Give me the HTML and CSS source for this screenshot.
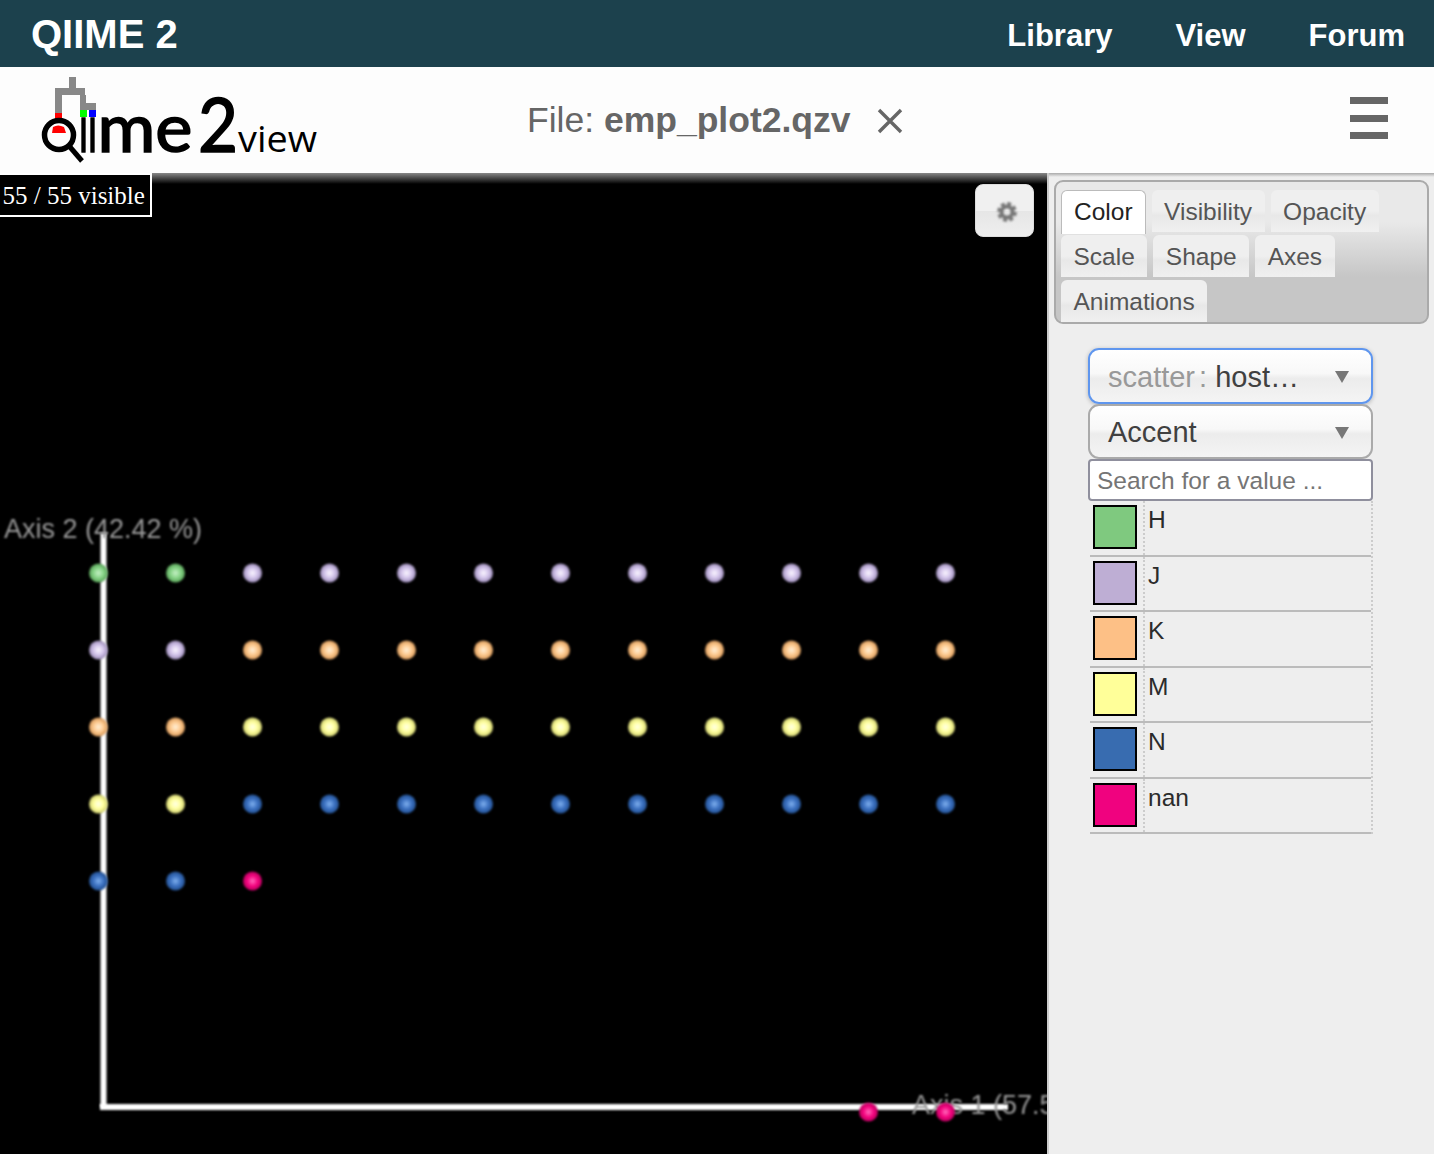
FILE: index.html
```html
<!DOCTYPE html>
<html lang="en">
<head>
<meta charset="UTF-8">
<title>QIIME 2 View</title>
<link rel="stylesheet" href="styles.css">
</head>
<body>
    <nav class="topbar">
        <span class="brand">QIIME 2</span>
        <div class="nav-links">
            <a>Library</a>
            <a>View</a>
            <a>Forum</a>
        </div>
    </nav>

    <header class="filebar">
        <svg class="logo" width="290" height="100" viewBox="30 70 290 100">
            <!-- tree -->
            <rect class="tree" x="69" y="77" width="7" height="12"/>
            <rect class="tree" x="55" y="88" width="30" height="7"/>
            <rect class="tree" x="55" y="95" width="7" height="18"/>
            <rect class="tree" x="80" y="95" width="6" height="9"/>
            <rect class="tree" x="80" y="103" width="16" height="7"/>
            <rect x="55" y="113" width="7" height="6" fill="#f00"/>
            <rect x="80" y="110" width="7" height="7" fill="#0f0"/>
            <rect x="89" y="110" width="7" height="7" fill="#00f"/>
            <!-- magnifier -->
            <path d="M52 133 L53 127 Q58 124 64 127 L66 133 Z" fill="#f00"/>
            <circle cx="59" cy="135" r="14.5" fill="none" stroke="#000" stroke-width="5.5"/>
            <line x1="70" y1="147" x2="82" y2="161" stroke="#000" stroke-width="5"/>
            <text class="logo-word" x="79" y="152" textLength="18" lengthAdjust="spacingAndGlyphs">ıı</text>
            <text class="logo-word" x="97.5" y="152" textLength="95" lengthAdjust="spacingAndGlyphs">me</text>
            <text class="logo-two" x="198" y="152" textLength="40" lengthAdjust="spacingAndGlyphs">2</text>
            <text class="logo-view" x="238" y="152" textLength="79" lengthAdjust="spacingAndGlyphs">view</text>
        </svg>
        <div class="file-name">
            <span>File: <b>emp_plot2.qzv</b></span>
            <svg class="close" width="26" height="26" viewBox="0 0 26 26">
                <path d="M2 2 L24 24 M24 2 L2 24" stroke="#666" stroke-width="3.4" fill="none"/>
            </svg>
        </div>
        <div class="burger"><span></span><span></span><span></span></div>
    </header>

    <main class="content">
        <section class="plot">
            <svg class="scene" width="1047" height="981" viewBox="0 173 1047 981">
                <defs>
                    <radialGradient id="dotGreen"><stop offset="0" stop-color="#c5f0c5"/><stop offset=".55" stop-color="#86d386"/><stop offset="1" stop-color="#58a058"/></radialGradient>
                    <radialGradient id="dotPurple"><stop offset="0" stop-color="#faf6ff"/><stop offset=".55" stop-color="#d2c3ea"/><stop offset="1" stop-color="#9a8bb5"/></radialGradient>
                    <radialGradient id="dotOrange"><stop offset="0" stop-color="#fff0d8"/><stop offset=".55" stop-color="#fdc98e"/><stop offset="1" stop-color="#d4975a"/></radialGradient>
                    <radialGradient id="dotYellow"><stop offset="0" stop-color="#ffffe8"/><stop offset=".55" stop-color="#ffff9c"/><stop offset="1" stop-color="#caca6e"/></radialGradient>
                    <radialGradient id="dotBlue"><stop offset="0" stop-color="#7fb0ee"/><stop offset=".55" stop-color="#3b70c0"/><stop offset="1" stop-color="#224f8f"/></radialGradient>
                    <radialGradient id="dotPink"><stop offset="0" stop-color="#ff6cbc"/><stop offset=".55" stop-color="#f5047f"/><stop offset="1" stop-color="#b8005e"/></radialGradient>
                </defs>

                <g class="axis">
                    <line x1="103.5" y1="533" x2="103.5" y2="1107"/>
                    <line x1="100" y1="1107" x2="1008" y2="1107"/>
                </g>
                <text class="axis-label" x="4" y="538">Axis 2 (42.42 %)</text>
                <text class="axis-label" x="912" y="1114">Axis 1 (57.58 %)</text>

                <g class="dots" fill="url(#dotGreen)">
                    <circle cx="98.5" cy="573" r="9.5"/><circle cx="175.5" cy="573" r="9.5"/>
                </g>
                <g class="dots" fill="url(#dotPurple)">
                    <circle cx="252.5" cy="573" r="9.5"/><circle cx="329.5" cy="573" r="9.5"/><circle cx="406.5" cy="573" r="9.5"/><circle cx="483.5" cy="573" r="9.5"/><circle cx="560.5" cy="573" r="9.5"/><circle cx="637.5" cy="573" r="9.5"/><circle cx="714.5" cy="573" r="9.5"/><circle cx="791.5" cy="573" r="9.5"/><circle cx="868.5" cy="573" r="9.5"/><circle cx="945.5" cy="573" r="9.5"/>
                    <circle cx="98.5" cy="650" r="9.5"/><circle cx="175.5" cy="650" r="9.5"/>
                </g>
                <g class="dots" fill="url(#dotOrange)">
                    <circle cx="252.5" cy="650" r="9.5"/><circle cx="329.5" cy="650" r="9.5"/><circle cx="406.5" cy="650" r="9.5"/><circle cx="483.5" cy="650" r="9.5"/><circle cx="560.5" cy="650" r="9.5"/><circle cx="637.5" cy="650" r="9.5"/><circle cx="714.5" cy="650" r="9.5"/><circle cx="791.5" cy="650" r="9.5"/><circle cx="868.5" cy="650" r="9.5"/><circle cx="945.5" cy="650" r="9.5"/>
                    <circle cx="98.5" cy="727" r="9.5"/><circle cx="175.5" cy="727" r="9.5"/>
                </g>
                <g class="dots" fill="url(#dotYellow)">
                    <circle cx="252.5" cy="727" r="9.5"/><circle cx="329.5" cy="727" r="9.5"/><circle cx="406.5" cy="727" r="9.5"/><circle cx="483.5" cy="727" r="9.5"/><circle cx="560.5" cy="727" r="9.5"/><circle cx="637.5" cy="727" r="9.5"/><circle cx="714.5" cy="727" r="9.5"/><circle cx="791.5" cy="727" r="9.5"/><circle cx="868.5" cy="727" r="9.5"/><circle cx="945.5" cy="727" r="9.5"/>
                    <circle cx="98.5" cy="804" r="9.5"/><circle cx="175.5" cy="804" r="9.5"/>
                </g>
                <g class="dots" fill="url(#dotBlue)">
                    <circle cx="252.5" cy="804" r="9.5"/><circle cx="329.5" cy="804" r="9.5"/><circle cx="406.5" cy="804" r="9.5"/><circle cx="483.5" cy="804" r="9.5"/><circle cx="560.5" cy="804" r="9.5"/><circle cx="637.5" cy="804" r="9.5"/><circle cx="714.5" cy="804" r="9.5"/><circle cx="791.5" cy="804" r="9.5"/><circle cx="868.5" cy="804" r="9.5"/><circle cx="945.5" cy="804" r="9.5"/>
                    <circle cx="98.5" cy="881" r="9.5"/><circle cx="175.5" cy="881" r="9.5"/>
                </g>
                <g class="dots" fill="url(#dotPink)">
                    <circle cx="252.5" cy="881" r="9.5"/><circle cx="868.5" cy="1112" r="9.5"/><circle cx="945.5" cy="1112" r="9.5"/>
                </g>
            </svg>
            <div class="plot-shade"></div>
            <div class="visible-count">55 / 55 visible</div>
            <button class="gear-btn">
                <svg class="gear" width="22" height="22" viewBox="0 0 22 22">
                    <circle cx="11" cy="11" r="5.5" fill="none" stroke="#777" stroke-width="4"/>
                    <circle cx="11" cy="11" r="8.3" fill="none" stroke="#777" stroke-width="3.2" stroke-dasharray="3.9 2.62"/>
                </svg>
            </button>
        </section>

        <aside class="sidebar">
            <ul class="tabs">
                <li class="tab active">Color</li>
                <li class="tab">Visibility</li>
                <li class="tab">Opacity</li>
                <li class="tab">Scale</li>
                <li class="tab">Shape</li>
                <li class="tab">Axes</li>
                <li class="tab">Animations</li>
            </ul>

            <div class="controls">
                <div class="dropdown focused">
                    <span class="truncate"><span class="muted">scatter<span class="colon">:</span></span> host…</span>
                    <i class="caret"></i>
                </div>
                <div class="dropdown">
                    <span class="truncate">Accent</span>
                    <i class="caret"></i>
                </div>
                <input class="search" type="text" placeholder="Search for a value ...">

                <div class="legend">
                    <div class="legend-row"><div class="swatch-cell"><div class="swatch green"></div></div><div class="label-cell">H</div></div>
                    <div class="legend-row"><div class="swatch-cell"><div class="swatch purple"></div></div><div class="label-cell">J</div></div>
                    <div class="legend-row"><div class="swatch-cell"><div class="swatch orange"></div></div><div class="label-cell">K</div></div>
                    <div class="legend-row"><div class="swatch-cell"><div class="swatch yellow"></div></div><div class="label-cell">M</div></div>
                    <div class="legend-row"><div class="swatch-cell"><div class="swatch blue"></div></div><div class="label-cell">N</div></div>
                    <div class="legend-row"><div class="swatch-cell"><div class="swatch pink"></div></div><div class="label-cell">nan</div></div>
                </div>
            </div>
        </aside>
    </main>
</body>
</html>
```

FILE: styles.css
```css
* {
    box-sizing: border-box;
}

html, body {
    margin: 0;
    height: 1154px;
    overflow: hidden;
}

body {
    font-family: "Liberation Sans", Arial, sans-serif;
    background-color: #eee;
}

/* top nav */
.topbar {
    height: 67px;
    background-color: #1c414d;
    color: #fff;
    font-weight: bold;
    display: flex;
    align-items: center;
    justify-content: space-between;
    padding: 0 29px 0 31px;
}

.brand {
    font-size: 40px;
    line-height: 72px;
    padding-top: 1px;
}

.nav-links {
    display: flex;
    gap: 63px;
    font-size: 31px;
    padding-top: 4px;
}

/* file bar */
.filebar {
    height: 106px;
    background-color: #fdfdfd;
    display: flex;
    align-items: center;
    position: relative;
}

.logo {
    flex: none;
    margin-left: 30px;
    align-self: flex-start;
    margin-top: 3px;
}

.tree {
    fill: #888;
}

.logo-word {
    font-family: Lato, sans-serif;
    font-size: 68px;
    stroke: #000;
    stroke-width: 1.6px;
}

.logo-two {
    font-family: Lato, sans-serif;
    font-size: 75px;
    stroke: #000;
    stroke-width: 1.6px;
}

.logo-view {
    font-family: "Open Sans", sans-serif;
    font-size: 36px;
}

.file-name {
    flex: none;
    margin-left: 207px;
    display: flex;
    align-items: center;
    gap: 26px;
    font-size: 35.5px;
    color: #666;
}

.close {
    margin-top: 2px;
}

.burger {
    margin-left: auto;
    margin-right: 46px;
    width: 38px;
    height: 42px;
    margin-top: -4px;
    display: flex;
    flex-direction: column;
    justify-content: space-between;
}

.burger span {
    height: 7px;
    background-color: #666;
}

/* main area */
.content {
    display: flex;
    height: 981px;
}

.plot {
    position: relative;
    width: 1047px;
    flex: none;
    background-color: #000;
    overflow: hidden;
}

.scene {
    display: block;
}

.axis line {
    stroke: #fff;
    stroke-width: 6;
    filter: blur(0.8px);
}

.axis-label {
    font-family: "Liberation Sans", Arial, sans-serif;
    font-size: 27px;
    fill: #999;
    filter: blur(0.9px);
}

.dots {
    filter: blur(0.9px);
}

.plot-shade {
    position: absolute;
    left: 0;
    top: 0;
    right: 0;
    height: 11px;
    background: linear-gradient(#888, #000);
}

.visible-count {
    position: absolute;
    left: 0;
    top: 0;
    height: 44px;
    width: 152px;
    background-color: #000;
    color: #fff;
    border: 2px solid #fff;
    border-left: none;
    font-family: "Liberation Serif", serif;
    font-size: 25px;
    line-height: 42px;
    padding-left: 2.5px;
    white-space: nowrap;
}

.gear-btn {
    position: absolute;
    left: 975px;
    top: 11px;
    width: 59px;
    height: 53px;
    padding: 0 0 0 4px;
    border: 1px solid #ddd;
    border-radius: 8px;
    background: linear-gradient(#f0f0f0 50%, #e6e6e6 52%, #eee);
}

.gear {
    display: block;
    margin: 3px auto 0;
    filter: blur(0.8px);
}

/* side panel */
.sidebar {
    flex: 1;
    border-left: 2px solid #ccc;
    background-color: #eee;
    padding: 7px 5px 0;
    background-image: linear-gradient(#aaa, #eee 4px);
    background-repeat: no-repeat;
}

.tabs {
    list-style: none;
    margin: 0;
    padding: 8px 7px 0 5px;
    width: 375px;
    height: 144px;
    border: 2px solid #aaa;
    border-radius: 9px;
    background: linear-gradient(#e9e9e9 0, #e9e9e9 40px, #c6c6c6 95px);
    display: flex;
    flex-wrap: wrap;
    align-content: flex-start;
    column-gap: 6px;
    row-gap: 3px;
}

.tab {
    height: 42px;
    padding: 0 12.5px;
    font-size: 24.5px;
    line-height: 43px;
    color: #555;
    border-radius: 6px 6px 0 0;
    background: linear-gradient(#efefef, #efefef 50%, #e8e8e8 60%, #f0f0f0);
}

.tab.active {
    height: 44px;
    margin-bottom: -2px;
    background: #fff;
    color: #222;
    border: 1px solid #bbb;
    border-bottom: none;
    padding: 0 12px;
    line-height: 42px;
}

.controls {
    width: 285px;
    margin: 24px 0 0 34px;
}

.dropdown {
    height: 55px;
    border: 2px solid #aaa;
    border-radius: 11px;
    background: linear-gradient(#fff, #f8f8f8 45%, #ececec 55%, #f4f4f4);
    display: flex;
    align-items: center;
    justify-content: space-between;
    padding: 2px 22px 0 18px;
    font-size: 29px;
    color: #404040;
}

.dropdown.focused {
    height: 56px;
    border-color: #5f96ee;
    box-shadow: 0 1px 4px rgba(0, 0, 0, 0.25);
}

.muted {
    color: #999;
}

.colon {
    margin-left: 4px;
}

.caret {
    width: 0;
    height: 0;
    border-left: 7px solid transparent;
    border-right: 7px solid transparent;
    border-top: 12px solid #777;
}

.search {
    display: block;
    width: 285px;
    height: 42px;
    border: 2px solid #8f8f9d;
    border-radius: 4px;
    background-color: #fff;
    padding: 2px 7px 0;
    font-family: "Liberation Sans", Arial, sans-serif;
    font-size: 24.5px;
    outline: none;
}

.search::placeholder {
    color: #757575;
    opacity: 1;
}

.legend {
    margin-left: 2px;
    border-right: 2px dotted #ccc;
}

.legend-row {
    display: flex;
    height: 55.5px;
    border-bottom: 2px solid #bbb;
}

.swatch-cell {
    width: 53px;
    flex: none;
    padding: 4px 0 0 3px;
}

.swatch {
    width: 44px;
    height: 44px;
    border: 2px solid #000;
}

.swatch.green { background-color: #7fc97f; }
.swatch.purple { background-color: #beaed4; }
.swatch.orange { background-color: #fdc086; }
.swatch.yellow { background-color: #ffff99; }
.swatch.blue { background-color: #386cb0; }
.swatch.pink { background-color: #f0027f; }

.label-cell {
    flex: 1;
    border-left: 2px dotted #ccc;
    padding-left: 3px;
    font-size: 24.5px;
    line-height: 38px;
    color: #2b2b2b;
}
```
